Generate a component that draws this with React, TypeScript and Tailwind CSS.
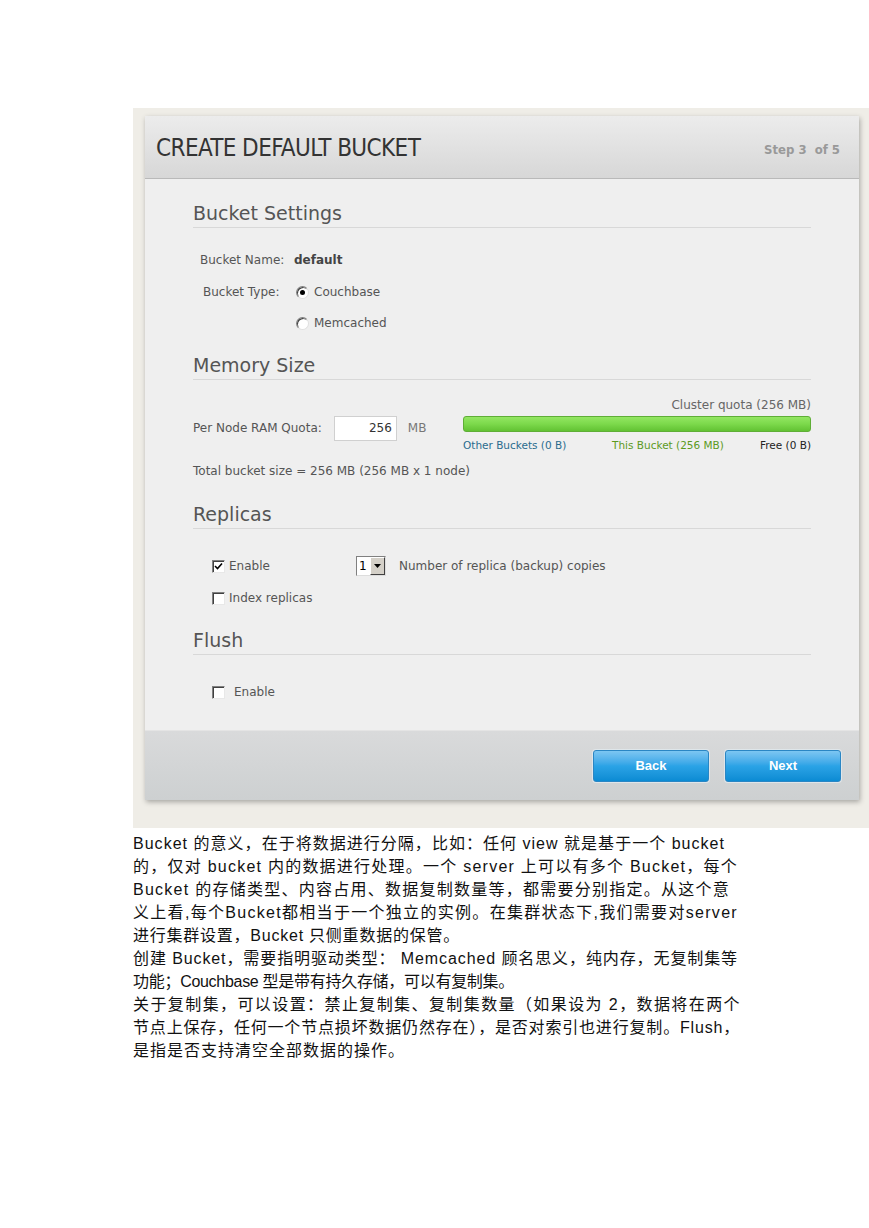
import { useLayoutEffect, useRef, useState } from 'react';

const UI = '"DejaVu Sans", Verdana, sans-serif';

function Radio({ on }: { on?: boolean }) {
    return (
        <span className="inline-flex w-[13px] h-[13px] rounded-full bg-white border border-t-[#808080] border-l-[#808080] border-r-[#e0e0e0] border-b-[#e0e0e0] items-center justify-center shadow-[inset_1px_1px_0_#404040]">
            {on && <span className="w-[5px] h-[5px] rounded-full bg-black" />}
        </span>
    );
}

function Check({ on }: { on?: boolean }) {
    return (
        <span className="inline-flex w-[13px] h-[13px] bg-white border border-t-[#808080] border-l-[#808080] border-r-[#e8e8e8] border-b-[#e8e8e8] shadow-[inset_1px_1px_0_#404040] items-center justify-center">
            {on && (
                <svg width="9" height="9" viewBox="0 0 9 9">
                    <path d="M1 4 L3.5 6.5 L8 1.5" stroke="#000" strokeWidth="1.6" fill="none" />
                </svg>
            )}
        </span>
    );
}

function Heading({ children }: { children: React.ReactNode }) {
    return (
        <div className="border-b border-[#d8d8d8] pb-[1px]">
            <h2 className="text-[19px] leading-[26px] text-[#555]">{children}</h2>
        </div>
    );
}

// each line of the Word-style paragraph, with the width it is spread to
const PARA = [
    { t: 'Bucket 的意义，在于将数据进行分隔，比如：任何 view 就是基于一个 bucket', w: 592 },
    { t: '的，仅对 bucket 内的数据进行处理。一个 server 上可以有多个 Bucket，每个', w: 605 },
    { t: 'Bucket 的存储类型、内容占用、数据复制数量等，都需要分别指定。从这个意', w: 597 },
    { t: '义上看,每个Bucket都相当于一个独立的实例。在集群状态下,我们需要对server', w: 605 },
    { t: '进行集群设置，Bucket 只侧重数据的保管。', w: 327 },
    { t: '创建 Bucket，需要指明驱动类型： Memcached 顾名思义，纯内存，无复制集等', w: 605 },
    { t: '功能；Couchbase 型是带有持久存储，可以有复制集。', w: 381 },
    { t: '关于复制集，可以设置：禁止复制集、复制集数量（如果设为 2，数据将在两个', w: 608 },
    { t: '节点上保存，任何一个节点损坏数据仍然存在），是否对索引也进行复制。Flush，', w: 607 },
    { t: '是指是否支持清空全部数据的操作。', w: 272 },
];

function Line({ t, w }: { t: string; w: number }) {
    const ref = useRef<HTMLSpanElement>(null);
    const [ls, setLs] = useState(0);
    useLayoutEffect(() => {
        if (!ref.current) return;
        const natural = ref.current.getBoundingClientRect().width;
        const n = Array.from(t).length;
        setLs((w - natural) / n);
    }, [t, w]);
    return (
        <div className="whitespace-nowrap">
            <span ref={ref} className="inline-block" style={{ letterSpacing: ls ? `${ls}px` : undefined }}>
                {t}
            </span>
        </div>
    );
}

export default function App() {
    return (
        <div className="bg-white w-[869px] min-h-[1228px] pt-[108px] pl-[133px]">
            {/* screenshot */}
            <div className="bg-[#efede7] w-[736px] h-[720px] pt-[8px] pl-[12px]">
                <div className="w-[714px] h-[684px] flex flex-col shadow-[1px_2px_5px_rgba(0,0,0,0.3)]" style={{ fontFamily: UI }}>
                    {/* header */}
                    <div className="h-[63px] shrink-0 bg-gradient-to-b from-[#ececec] to-[#d7d7d7] border-b border-[#b9b9b9] flex items-center justify-between pl-[11px] pr-[19px]">
                        <span className="text-[24px] text-[#333] pt-[2px] tracking-[-0.6px]" style={{ fontFamily: '"DejaVu Sans Condensed", "DejaVu Sans", sans-serif' }}>
                            CREATE DEFAULT BUCKET
                        </span>
                        <span className="text-[13px] font-bold text-[#999] pt-[6px]" style={{ fontFamily: '"DejaVu Sans Condensed", "DejaVu Sans", sans-serif' }}>
                            Step 3&nbsp;&nbsp;of 5
                        </span>
                    </div>

                    {/* body */}
                    <div className="flex-1 bg-[#efefef] px-[48px] pt-[21px] text-[12px] text-[#555]">
                        <Heading>Bucket Settings</Heading>
                        <div className="mt-[22px] h-[20px] flex items-center">
                            <span className="w-[101px] pl-[7px]">Bucket Name:</span>
                            <span className="font-bold text-[#444]">default</span>
                        </div>
                        <div className="mt-[12px] h-[20px] flex items-center">
                            <span className="w-[103px] pl-[10px]">Bucket Type:</span>
                            <Radio on />
                            <span className="ml-[5px]">Couchbase</span>
                        </div>
                        <div className="mt-[11px] h-[20px] flex items-center pl-[103px]">
                            <Radio />
                            <span className="ml-[5px]">Memcached</span>
                        </div>

                        <div className="mt-[19px]">
                            <Heading>Memory Size</Heading>
                        </div>
                        <div className="flex mt-[17px]">
                            <div className="w-[270px] pt-[18px]">
                                <div className="flex items-center h-[26px]">
                                    <span>Per Node RAM Quota:</span>
                                    <span className="ml-[12px] w-[63px] h-[25px] bg-white border border-[#d0d0d0] text-right pr-[4px] leading-[23px] text-[#333]">256</span>
                                    <span className="ml-[11px] text-[#777]">MB</span>
                                </div>
                            </div>
                            <div className="flex-1">
                                <div className="text-right text-[12px] leading-[16px] text-[#666]">Cluster quota (256 MB)</div>
                                <div className="mt-[3px] h-[16px] rounded-[3px] border border-[#5fae36] bg-gradient-to-b from-[#93e662] via-[#7cd94b] to-[#62c233]" />
                                <div className="mt-[6px] flex text-[10.5px] leading-[14px]">
                                    <span className="w-[149px] text-[#2a6c8e]">Other Buckets (0 B)</span>
                                    <span className="text-[#5c9a1e]">This Bucket (256 MB)</span>
                                    <span className="ml-auto text-[#222]">Free (0 B)</span>
                                </div>
                            </div>
                        </div>
                        <div className="mt-[11px] h-[16px] leading-[16px]">Total bucket size = 256 MB (256 MB x 1 node)</div>

                        <div className="mt-[22px]">
                            <Heading>Replicas</Heading>
                        </div>
                        <div className="mt-[27px] h-[20px] flex items-center pl-[19px]">
                            <Check on />
                            <span className="ml-[4px] w-[127px]">Enable</span>
                            <span className="flex h-[20px] border border-t-[#808080] border-l-[#808080] border-r-[#ddd] border-b-[#ddd] bg-white">
                                <span className="w-[13px] pl-[2px] text-[#000] leading-[18px] text-[12px]">1</span>
                                <span className="w-[15px] h-[18px] bg-[#d4d0c8] border border-t-white border-l-white border-r-[#404040] border-b-[#404040] flex items-center justify-center">
                                    <svg width="7" height="4" viewBox="0 0 7 4"><path d="M0 0 H7 L3.5 4 Z" fill="#000" /></svg>
                                </span>
                            </span>
                            <span className="ml-[13px]">Number of replica (backup) copies</span>
                        </div>
                        <div className="mt-[12px] h-[20px] flex items-center pl-[19px]">
                            <Check />
                            <span className="ml-[4px]">Index replicas</span>
                        </div>

                        <div className="mt-[19px]">
                            <Heading>Flush</Heading>
                        </div>
                        <div className="mt-[27px] h-[20px] flex items-center pl-[19px]">
                            <Check />
                            <span className="ml-[9px]">Enable</span>
                        </div>
                    </div>

                    {/* footer */}
                    <div className="h-[70px] shrink-0 bg-gradient-to-b from-[#d9dadb] to-[#cdd0d1] border-t border-[#e4e4e4] flex justify-end items-start pt-[19px] pr-[18px] gap-[16px]">
                        {['Back', 'Next'].map((b) => (
                            <button
                                key={b}
                                className="w-[116px] h-[32px] rounded-[3px] border border-[#2a86c4] bg-gradient-to-b from-[#7cc6f2] via-[#2aa3e6] to-[#0a8bd3] text-white font-bold text-[13px] shadow-[0_0_0_1px_#dfe6ea]"
                                style={{ fontFamily: '"Liberation Sans", Arial, sans-serif' }}
                            >
                                {b}
                            </button>
                        ))}
                    </div>
                </div>
            </div>

            {/* description */}
            <div className="mt-[4px] text-[16px] leading-[23px] text-[#111]" style={{ fontFamily: '"Liberation Sans", "Noto Sans CJK SC", sans-serif' }}>
                {PARA.map((p, i) => (
                    <Line key={i} t={p.t} w={p.w} />
                ))}
            </div>
        </div>
    );
}
